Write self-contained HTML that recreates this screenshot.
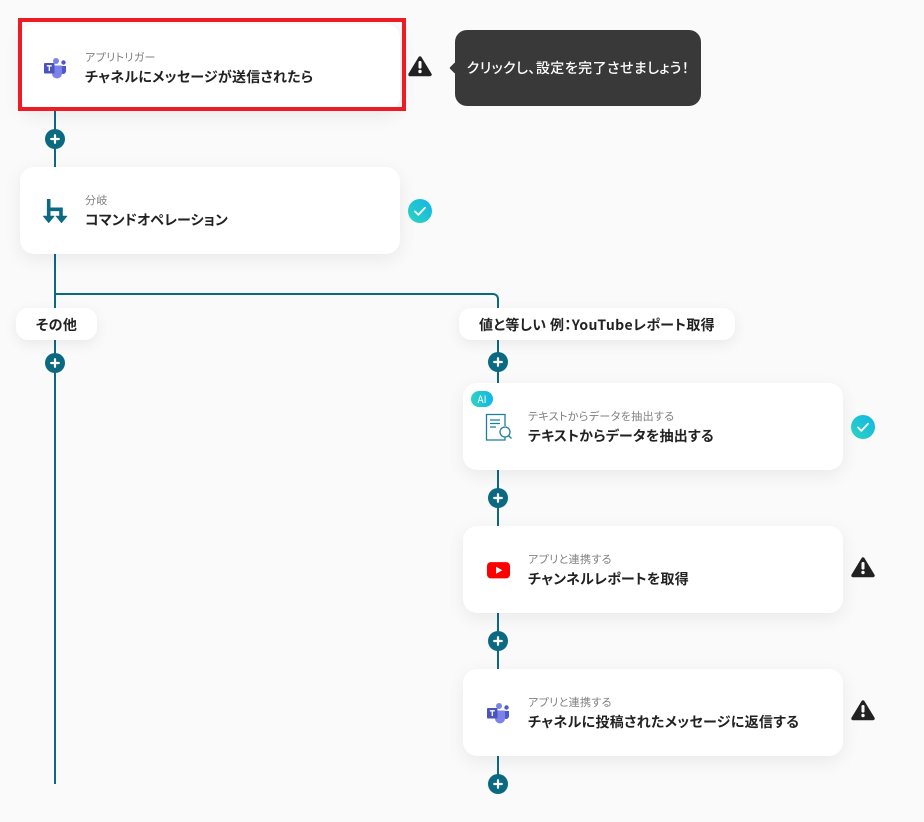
<!DOCTYPE html>
<html lang="ja">
<head>
<meta charset="utf-8">
<style>
html,body{margin:0;padding:0;}
body{width:924px;height:822px;position:relative;overflow:hidden;background:#fafafa;font-family:"Noto Sans CJK JP","Liberation Sans",sans-serif;font-feature-settings:"palt";color:#222;}
.abs{position:absolute;}
.line{position:absolute;background:#0b6a82;}
.card{position:absolute;width:380px;height:87px;background:#fff;border-radius:14px;box-shadow:0 5px 18px rgba(0,0,0,.07);}
.sub{position:absolute;left:65px;top:25px;font-size:11px;line-height:16px;color:#808080;white-space:nowrap;letter-spacing:.38px;}
.tit{position:absolute;left:65px;top:43px;font-size:14px;line-height:21px;font-weight:700;color:#222;white-space:nowrap;letter-spacing:.22px;}
.ico{position:absolute;}
.lab{position:absolute;height:32px;background:#fff;border-radius:12px;box-shadow:0 4px 14px rgba(0,0,0,.07);font-size:14px;font-weight:700;line-height:34px;text-align:center;white-space:nowrap;color:#222;letter-spacing:.35px;}
.plus{position:absolute;width:20px;height:20px;}
.stat{position:absolute;width:24px;height:24px;}
</style>
</head>
<body>
<svg width="0" height="0" style="position:absolute">
<defs>
<linearGradient id="g" x1="0" y1="1" x2="1" y2="0"><stop offset="0" stop-color="#2dd4bf"/><stop offset="1" stop-color="#12b5e8"/></linearGradient>
<symbol id="p" viewBox="0 0 20 20"><circle cx="10" cy="10" r="10" fill="#0b6a82"/><path d="M10 6.200v7.600M6.200 10h7.600" stroke="#fff" stroke-width="2.200" stroke-linecap="round"/></symbol>
<symbol id="w" viewBox="0 0 24 22"><path d="M12 3L22 19.500H2z" fill="#222" stroke="#222" stroke-width="3.400" stroke-linejoin="round"/><rect x="10.500" y="6" width="3" height="7.500" rx="1.300" fill="#fff"/><circle cx="12" cy="16.500" r="1.700" fill="#fff"/></symbol>
<symbol id="c" viewBox="0 0 24 24"><circle cx="12" cy="12" r="12" fill="url(#g)"/><path d="M7 12.500l3.400 3.300L17 8.800" fill="none" stroke="#fff" stroke-width="1.800" stroke-linecap="round" stroke-linejoin="round"/></symbol>
<symbol id="t" viewBox="0 0 24 22"><circle cx="13" cy="4" r="3" fill="#7b83eb"/><circle cx="20.500" cy="5.500" r="2.200" fill="#5059c9"/><path d="M17 9h6v4.500a3 3 0 0 1-6 1z" fill="#5059c9"/><path d="M9 8.500h10v8a5 5 0 0 1-10 0z" fill="#7b83eb"/><rect x="1" y="6" width="10.500" height="10.500" rx="1" fill="#4b53bc"/><path d="M3.800 8.800h5M6.300 8.800v5.200" stroke="#fff" stroke-width="1.300"/></symbol>
</defs>
</svg>

<div class="line" style="left:54px;top:111px;width:2px;height:56px"></div>
<div class="line" style="left:54px;top:254px;width:2px;height:530px"></div>
<div class="abs" style="left:55px;top:293px;width:444px;height:30px;box-sizing:border-box;border-top:2px solid #0b6a82;border-right:2px solid #0b6a82;border-top-right-radius:6px"></div>
<div class="line" style="left:497px;top:323px;width:2px;height:60px"></div>
<div class="line" style="left:497px;top:470px;width:2px;height:56px"></div>
<div class="line" style="left:497px;top:613px;width:2px;height:56px"></div>
<div class="line" style="left:497px;top:756px;width:2px;height:20px"></div>

<svg class="plus" style="left:45px;top:129px"><use href="#p"/></svg>
<svg class="plus" style="left:45px;top:353px"><use href="#p"/></svg>
<svg class="plus" style="left:488px;top:352px"><use href="#p"/></svg>
<svg class="plus" style="left:488px;top:488px"><use href="#p"/></svg>
<svg class="plus" style="left:488px;top:631px"><use href="#p"/></svg>
<svg class="plus" style="left:488px;top:774px"><use href="#p"/></svg>

<div class="card" style="left:20px;top:24px">
  <svg class="ico" style="left:23px;top:33px" width="24" height="22"><use href="#t"/></svg>
  <div class="sub">アプリトリガー</div>
  <div class="tit">チャネルにメッセージが送信されたら</div>
</div>
<div class="abs" style="left:18px;top:18px;width:388px;height:93px;box-sizing:border-box;border:4px solid #ed1c24"></div>
<svg class="stat" style="left:408px;top:55px;height:22px" viewBox="0 0 24 22"><use href="#w"/></svg>

<div class="abs" style="left:455px;top:30px;width:246px;height:76px;background:#393939;border-radius:12px;color:#fff;font-size:14px;font-weight:500;line-height:76px;text-align:center;white-space:nowrap;letter-spacing:.45px">クリックし、設定を完了させましょう！</div>
<div class="abs" style="left:451px;top:64px;width:8px;height:8px;background:#393939;transform:rotate(45deg);border-radius:1px"></div>

<div class="card" style="left:20px;top:167px">
  <svg class="ico" style="left:22px;top:30px" width="26" height="28" viewBox="0 0 26 28">
    <path d="M6.700 2v18M6.700 12.300H19V20" fill="none" stroke="#0b6a82" stroke-width="3.600"/>
    <path d="M1 19h11.400l-5.700 7zM13.800 19h11.400l-5.700 7z" fill="#0b6a82" stroke="#0b6a82" stroke-width=".5" stroke-linejoin="round"/>
  </svg>
  <div class="sub">分岐</div>
  <div class="tit" style="letter-spacing:.05px">コマンドオペレーション</div>
</div>
<svg class="stat" style="left:408px;top:199px"><use href="#c"/></svg>

<div class="lab" style="left:16px;top:308px;width:81px">その他</div>
<div class="lab" style="left:459px;top:308px;width:276px">値と等しい 例：YouTubeレポート取得</div>

<div class="card" style="left:463px;top:383px">
  <div class="abs" style="left:8px;top:8px;width:22px;height:16px;border-radius:8px;background:linear-gradient(90deg,#2dd4bf,#12b5e8);color:#fff;font-size:10px;line-height:16px;text-align:center">AI</div>
  <svg class="ico" style="left:22px;top:30px" width="28" height="28" viewBox="0 0 28 28" fill="none" stroke="#1f7f97" stroke-width="1.300">
    <path d="M20 24v3H1.500V1.500H20V13"/>
    <path d="M5 7h10M5 10.500h10M5 14h6"/>
    <circle cx="20" cy="19" r="5"/>
    <path d="M23.500 22.500l3 3"/>
  </svg>
  <div class="sub">テキストからデータを抽出する</div>
  <div class="tit">テキストからデータを抽出する</div>
</div>
<svg class="stat" style="left:851px;top:415px"><use href="#c"/></svg>

<div class="card" style="left:463px;top:526px">
  <svg class="ico" style="left:23.500px;top:36px" width="23" height="16.500" viewBox="0 0 24 17">
    <rect x="0" y="0" width="24" height="17" rx="4" fill="#f00"/>
    <path d="M9.500 4.800l6.500 3.700-6.500 3.700z" fill="#fff"/>
  </svg>
  <div class="sub">アプリと連携する</div>
  <div class="tit">チャンネルレポートを取得</div>
</div>
<svg class="stat" style="left:851px;top:556px;height:22px" viewBox="0 0 24 22"><use href="#w"/></svg>

<div class="card" style="left:463px;top:669px">
  <svg class="ico" style="left:23px;top:33px" width="24" height="22"><use href="#t"/></svg>
  <div class="sub">アプリと連携する</div>
  <div class="tit" style="letter-spacing:.3px">チャネルに投稿されたメッセージに返信する</div>
</div>
<svg class="stat" style="left:851px;top:699px;height:22px" viewBox="0 0 24 22"><use href="#w"/></svg>
</body>
</html>
